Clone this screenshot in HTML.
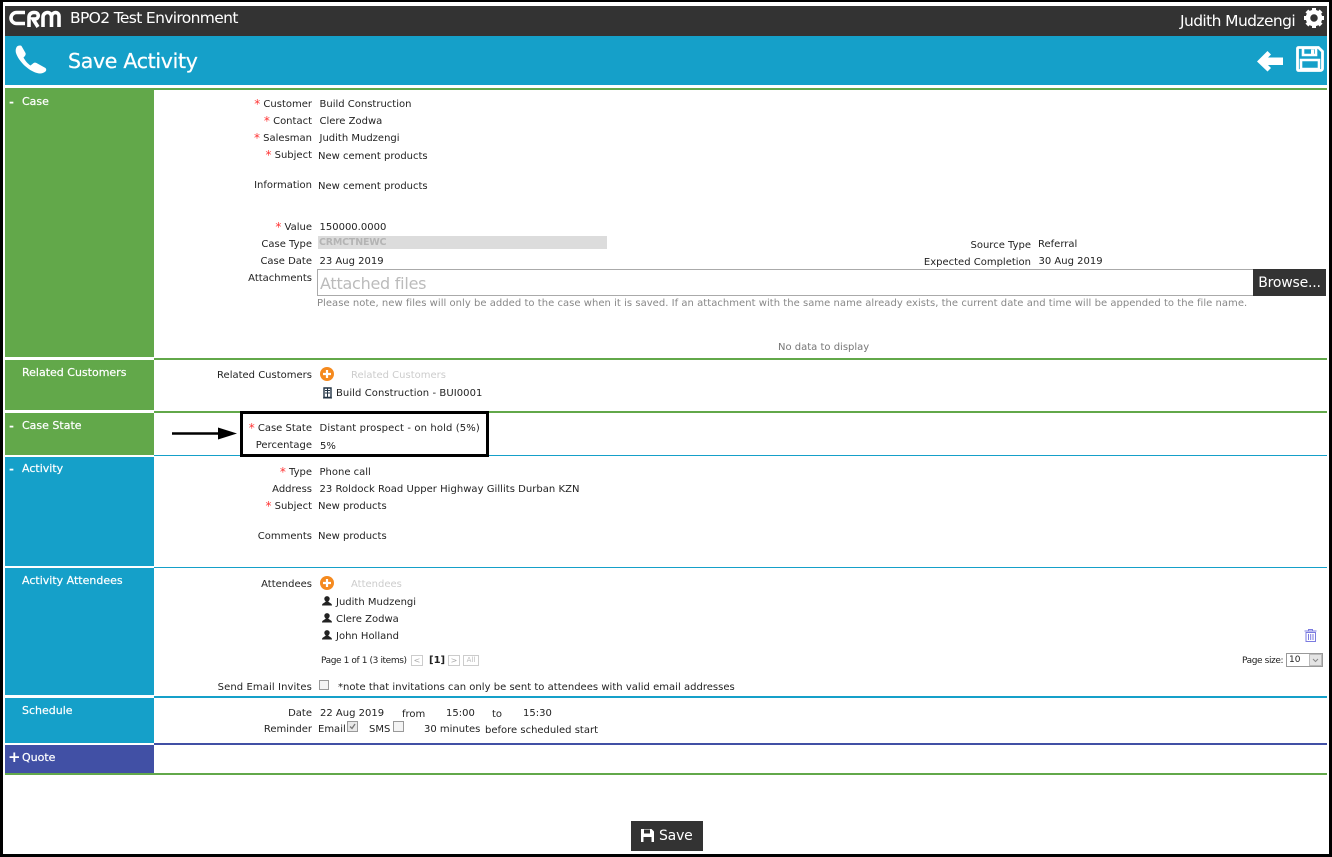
<!DOCTYPE html>
<html><head><meta charset="utf-8"><style>
html,body{margin:0;padding:0;background:#fff}
#p{position:relative;width:1332px;height:857px;overflow:hidden;background:#fff;font:10px/12px "DejaVu Sans","Liberation Sans",sans-serif;color:#222}
#p div,#p svg{position:absolute}
.t{white-space:nowrap;margin-top:2px}
.n{margin-top:0}
.l{white-space:nowrap;right:1020px;text-align:right;margin-top:2px}
.r{color:#f33;font-size:12px;line-height:0;position:relative;top:1px}
.h{white-space:nowrap;color:#fff;font-size:11px;line-height:14px;left:22px;margin-top:1px;-webkit-text-stroke:.2px #fff}
.g{background:#62a84a}.b{background:#15a0c9}.q{background:#4150a5}
.m{white-space:nowrap;color:#fff;font-weight:bold;left:9px;font-size:12px;line-height:12px;margin-top:1px}
</style></head><body><div id="p">
<div style="left:0;top:0;width:1332px;height:2px;background:#000"></div>
<div style="left:0;top:854px;width:1332px;height:3px;background:#000"></div>
<div style="left:0;top:0;width:3px;height:857px;background:#000"></div>
<div style="left:1329px;top:0;width:3px;height:857px;background:#000"></div>
<div style="left:5px;top:6px;width:1322px;height:30px;background:#333"></div>
<div class="b" style="left:5px;top:36px;width:1322px;height:49px"></div>
<svg style="left:9px;top:9px" width="52" height="19" viewBox="0 0 52 19" fill="none" stroke="#fff" stroke-width="3.600">
<path d="M16 3.500H7.500a5.500 5.500 0 0 0 0 11H16"/><path d="M20 18V8a4.500 4.500 0 0 1 4.500-4.500h1.500a3 3 0 0 1 0 6.500h-2l5 8"/><path d="M34 18V8a4.500 4.500 0 0 1 4.500-4.500a4 4 0 0 1 4 4V18M42.500 8a4.500 4.500 0 0 1 4-4.500a3.500 3.500 0 0 1 3.500 3.500V18"/></svg>
<div class="t n" style="left:70px;top:9px;color:#fff;font:15.500px/19px 'DejaVu Sans',sans-serif;letter-spacing:-.65px">BPO2 Test Environment</div>
<div class="t n" style="left:1180px;top:12px;color:#fff;font:15.500px/19px 'DejaVu Sans',sans-serif;letter-spacing:-.6px">Judith Mudzengi</div>
<svg style="left:1303px;top:7px" width="22" height="22" viewBox="0 0 22 22"><circle cx="11" cy="11" r="6" fill="none" stroke="#fff" stroke-width="4.500"/><g stroke="#fff" stroke-width="4"><path d="M11 1v4M11 17v4M1 11h4M17 11h4M3.900 3.900l2.800 2.800M15.300 15.300l2.800 2.800M3.900 18.100l2.800-2.800M15.300 6.700l2.800-2.800"/></g></svg>
<svg style="left:10px;top:40px" width="40" height="40" viewBox="0 0 40 40"><path d="M7 6.500C8 5.500 10.500 5 11.500 6L15.500 13C16 14 15.500 15.500 14.500 16.500L13.500 17.500C15 20.500 18 24 20.500 25.500L23 23.500C24 22.500 25.500 22.500 26.500 23L35.500 28C36.500 29 36.500 30.500 35.500 31.500C33 33.500 30 34 27 33C18 30.500 8.500 21 6 13C5.500 11 5.500 8.500 7 6.500Z" fill="#fff"/></svg>
<div class="t n" style="left:68px;top:49px;color:#fff;font:20.500px/25px 'DejaVu Sans',sans-serif;letter-spacing:-.3px;-webkit-text-stroke:.25px #fff">Save Activity</div>
<svg style="left:1256px;top:47px" width="28" height="27" viewBox="0 0 28 27"><path d="M1 14.500 11.500 4 15 7.500 12 10.500H27V18H12l3 3-3.500 3.500Z" fill="#fff"/></svg>
<svg style="left:1296px;top:46px" width="28" height="26" viewBox="0 0 28 26"><path d="M2.500 1.500h20l4 4v17a2 2 0 0 1-2 2h-22a1 1 0 0 1-1-1v-21a1 1 0 0 1 1-1Z" fill="none" stroke="#fff" stroke-width="2.800"/><path d="M7 2h13v7H7ZM5 14h18v9H5Z" fill="none" stroke="#fff" stroke-width="2.600"/><rect x="15" y="3.500" width="3" height="4.500" fill="#fff"/></svg>

<!-- sidebars -->
<div class="g" style="left:5px;top:88px;width:149px;height:269px"></div>
<div class="g" style="left:154px;top:88px;width:1173px;height:2px"></div>
<div class="g" style="left:5px;top:360px;width:149px;height:50px"></div>
<div class="g" style="left:154px;top:358px;width:1173px;height:2px"></div>
<div class="g" style="left:5px;top:413px;width:149px;height:42px"></div>
<div class="g" style="left:154px;top:411px;width:1173px;height:2px"></div>
<div class="b" style="left:5px;top:457px;width:149px;height:109px"></div>
<div class="b" style="left:154px;top:455px;width:1173px;height:1px"></div>
<div class="b" style="left:5px;top:568px;width:149px;height:127px"></div>
<div class="b" style="left:154px;top:567px;width:1173px;height:1px"></div>
<div class="b" style="left:5px;top:698px;width:149px;height:45px"></div>
<div class="b" style="left:154px;top:696px;width:1173px;height:2px"></div>
<div class="q" style="left:5px;top:745px;width:149px;height:28px"></div>
<div class="q" style="left:154px;top:743px;width:1173px;height:2px"></div>
<div class="g" style="left:5px;top:773px;width:1322px;height:2px"></div>

<div class="m" style="top:95px">-</div><div class="h" style="top:94px">Case</div>
<div class="h" style="top:365px">Related Customers</div>
<div class="m" style="top:419px">-</div><div class="h" style="top:418px">Case State</div>
<div class="m" style="top:462px">-</div><div class="h" style="top:461px">Activity</div>
<div class="h" style="top:573px">Activity Attendees</div>
<div class="h" style="top:703px">Schedule</div>
<div class="m" style="top:750px;left:8px;font-size:15px">+</div><div class="h" style="top:750px">Quote</div>

<!-- Case -->
<div class="l" style="top:97px"><span class="r">*</span> Customer</div><div class="t" style="left:319.500px;top:97px">Build Construction</div>
<div class="l" style="top:114px"><span class="r">*</span> Contact</div><div class="t" style="left:319.500px;top:114px">Clere Zodwa</div>
<div class="l" style="top:131px"><span class="r">*</span> Salesman</div><div class="t" style="left:319.500px;top:131px">Judith Mudzengi</div>
<div class="l" style="top:148px"><span class="r">*</span> Subject</div><div class="t" style="left:318px;top:149px">New cement products</div>
<div class="l" style="top:178px">Information</div><div class="t" style="left:318px;top:179px">New cement products</div>
<div class="l" style="top:220px"><span class="r">*</span> Value</div><div class="t" style="left:319.500px;top:220px">150000.0000</div>
<div class="l" style="top:237px">Case Type</div>
<div style="left:318px;top:236px;width:289px;height:13px;background:#dcdcdc"></div>
<div class="t" style="left:319px;top:235px;color:#b4b4b4;font-size:9.500px;font-weight:bold;letter-spacing:-.2px">CRMCTNEWC</div>
<div class="l" style="top:254px">Case Date</div><div class="t" style="left:319.500px;top:254px">23 Aug 2019</div>
<div class="t" style="right:301px;top:238px">Source Type</div><div class="t" style="left:1038px;top:237px">Referral</div>
<div class="t" style="right:301px;top:255px">Expected Completion</div><div class="t" style="left:1038.500px;top:254px">30 Aug 2019</div>
<div class="l" style="top:271px">Attachments</div>
<div style="left:317px;top:269px;width:936px;height:27px;border:1px solid #aaa;border-right:0;box-sizing:border-box"></div>
<div class="t n" style="left:320px;top:275px;color:#bbb;font-size:16px;line-height:18px;letter-spacing:-.25px">Attached files</div>
<div class="t n" style="left:1253px;top:269px;width:73px;height:27px;background:#333;color:#fff;font-size:14px;line-height:29px;text-align:center;letter-spacing:-.2px">Browse...</div>
<div class="t n" style="left:317px;top:298px;color:#888;letter-spacing:.03px">Please note, new files will only be added to the case when it is saved. If an attachment with the same name already exists, the current date and time will be appended to the file name.</div>
<div class="t" style="left:778px;top:340px;color:#777">No data to display</div>

<!-- Related -->
<div class="l" style="top:368px">Related Customers</div>
<svg style="left:320px;top:367px" width="14" height="14"><circle cx="7" cy="7" r="7" fill="#f58a1f"/><path d="M7 3v8M3 7h8" stroke="#fff" stroke-width="2.200"/></svg>
<div class="t" style="left:351px;top:368px;color:#ccc">Related Customers</div>
<svg style="left:323px;top:387px" width="9" height="12" viewBox="0 0 9 12"><path d="M1 1h7v9.500H1Z" fill="none" stroke="#234" stroke-width="1.400"/><path d="M2 3.500h5M2 6h5M0 11h9" stroke="#234"/><path d="M4.500 1v9" stroke="#234"/></svg>
<div class="t" style="left:336px;top:386px;letter-spacing:.07px">Build Construction - BUI0001</div>

<!-- Case state -->
<div class="l" style="top:421px"><span class="r">*</span> Case State</div><div class="t" style="left:319.500px;top:421px;letter-spacing:.12px">Distant prospect - on hold (5%)</div>
<div class="l" style="top:438px">Percentage</div><div class="t" style="left:320px;top:439px">5%</div>
<div style="left:240px;top:411px;width:249px;height:46px;border:3px solid #000;box-sizing:border-box"></div>
<svg style="left:172px;top:426px" width="66" height="16"><path d="M0 7.500h48" stroke="#000" stroke-width="2.400"/><path d="M46 1.500 65 7.500 46 13.500Z" fill="#000"/></svg>

<!-- Activity -->
<div class="l" style="top:465px"><span class="r">*</span> Type</div><div class="t" style="left:319.500px;top:465px">Phone call</div>
<div class="l" style="top:482px">Address</div><div class="t" style="left:319.500px;top:482px;letter-spacing:.03px">23 Roldock Road Upper Highway Gillits Durban KZN</div>
<div class="l" style="top:499px"><span class="r">*</span> Subject</div><div class="t" style="left:318px;top:499px">New products</div>
<div class="l" style="top:529px">Comments</div><div class="t" style="left:318px;top:529px">New products</div>

<!-- Attendees -->
<div class="l" style="top:577px">Attendees</div>
<svg style="left:320px;top:576px" width="14" height="14"><circle cx="7" cy="7" r="7" fill="#f58a1f"/><path d="M7 3v8M3 7h8" stroke="#fff" stroke-width="2.200"/></svg>
<div class="t" style="left:351px;top:577px;color:#ccc">Attendees</div>
<svg style="left:322px;top:596px" width="10" height="10"><circle cx="5" cy="2.800" r="2.700" fill="#222"/><path d="M0 9.500C0 7 3 7 4 5h2c1 2 4 2 4 4.500Z" fill="#222"/></svg>
<div class="t" style="left:336px;top:595px">Judith Mudzengi</div>
<svg style="left:322px;top:613px" width="10" height="10"><circle cx="5" cy="2.800" r="2.700" fill="#222"/><path d="M0 9.500C0 7 3 7 4 5h2c1 2 4 2 4 4.500Z" fill="#222"/></svg>
<div class="t" style="left:336px;top:612px">Clere Zodwa</div>
<svg style="left:322px;top:630px" width="10" height="10"><circle cx="5" cy="2.800" r="2.700" fill="#222"/><path d="M0 9.500C0 7 3 7 4 5h2c1 2 4 2 4 4.500Z" fill="#222"/></svg>
<div class="t" style="left:336px;top:629px">John Holland</div>
<div class="t" style="left:321px;top:653px;font-size:9px;letter-spacing:-.4px">Page 1 of 1 (3 items)</div>
<div style="left:411px;top:655px;width:12px;height:11px;border:1px solid #ccc;box-sizing:border-box;color:#aaa;font-size:8px;line-height:9px;text-align:center">&lt;</div>
<div class="t" style="left:429px;top:653px;font-weight:bold">[1]</div>
<div style="left:448px;top:655px;width:12px;height:11px;border:1px solid #ccc;box-sizing:border-box;color:#aaa;font-size:8px;line-height:9px;text-align:center">&gt;</div>
<div style="left:463px;top:655px;width:16px;height:11px;border:1px solid #ccc;box-sizing:border-box;color:#bbb;font-size:7px;line-height:9px;text-align:center">All</div>
<svg style="left:1304px;top:629px" width="13" height="13" viewBox="0 0 13 13" fill="none" stroke="#7b7be0"><path d="M2 3.500h9.500v9H2ZM.5 2h12M4.500 2V.5h4V2M4.500 5v6M6.700 5v6M9 5v6"/></svg>
<div class="t" style="left:1242px;top:653px;font-size:9px;letter-spacing:-.4px">Page size:</div>
<div style="left:1286px;top:653px;width:37px;height:14px;border:1px solid #999;box-sizing:border-box;font-size:9px;line-height:12px;padding-left:2px">10</div>
<div style="left:1309px;top:654px;width:13px;height:12px;background:#e4e4e4;border:1px solid #bbb;box-sizing:border-box"></div>
<svg style="left:1312px;top:658px" width="7" height="5"><path d="M1 1l2.500 2.500L6 1" fill="none" stroke="#888"/></svg>
<div class="l" style="top:680px;letter-spacing:.1px">Send Email Invites</div>
<div style="left:319px;top:680px;width:10px;height:10px;border:1px solid #999;box-sizing:border-box;background:#f4f4f4"></div>
<div class="t" style="left:338px;top:680px;letter-spacing:.02px">*note that invitations can only be sent to attendees with valid email addresses</div>

<!-- Schedule -->
<div class="l" style="top:706px">Date</div><div class="t" style="left:320px;top:706px">22 Aug 2019</div>
<div class="t" style="left:402px;top:707px">from</div><div class="t" style="left:446px;top:706px">15:00</div>
<div class="t" style="left:492px;top:707px">to</div><div class="t" style="left:523px;top:706px">15:30</div>
<div class="l" style="top:722px">Reminder</div><div class="t" style="left:318px;top:722px">Email</div>
<div style="left:347px;top:721px;width:11px;height:11px;border:1px solid #999;box-sizing:border-box;background:#e8e8e8"></div>
<svg style="left:349px;top:723px" width="7" height="7"><path d="M1 3.500 3 5.500 6 1" fill="none" stroke="#777" stroke-width="1.300"/></svg>
<div class="t" style="left:369px;top:722px">SMS</div>
<div style="left:393px;top:721px;width:11px;height:11px;border:1px solid #999;box-sizing:border-box;background:#f4f4f4"></div>
<div class="t" style="left:424px;top:722px">30 minutes</div><div class="t" style="left:485px;top:723px">before scheduled start</div>

<!-- Save -->
<div style="left:631px;top:821px;width:72px;height:30px;background:#333"></div>
<svg style="left:640px;top:828px" width="15" height="15" viewBox="0 0 15 15"><path d="M1 1h10.500L14 3.500V14H1Z" fill="#fff"/><path d="M4 1.500h6v4H4ZM3.500 9h8v5h-8Z" fill="#333"/></svg>
<div class="t n" style="left:659px;top:828px;color:#fff;font-size:14px;line-height:17px;letter-spacing:-.2px">Save</div>
</div></body></html>
